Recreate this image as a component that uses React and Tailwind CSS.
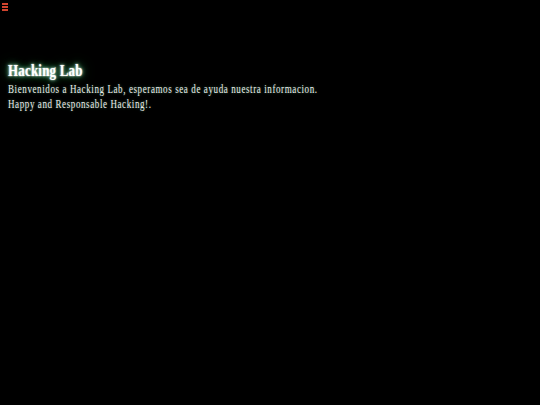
export default function App() {
  return (
    <div className="min-h-screen bg-black text-[#ececec]" style={{ fontFamily: '"Liberation Serif", "Times New Roman", serif' }}>
      {/* menu toggle */}
      <button className="flex flex-col gap-[1.5px] pl-[2px] pt-[3px]">
        <span className="block h-[1.5px] w-[6px] bg-[#d0442e]" />
        <span className="block h-[1.5px] w-[6px] bg-[#d0442e]" />
        <span className="block h-[1.5px] w-[6px] bg-[#d0442e]" />
      </button>

      <div className="px-2 pt-[50px]">
        <h1 className="text-[17px] leading-[20px] font-bold">
          <span className="inline-block origin-left scale-x-[0.76] tracking-[0.3px] text-white [text-shadow:0_0_2px_#fff,0_0_5px_rgba(160,255,200,0.8),0_0_10px_rgba(60,220,130,0.6),0_0_18px_rgba(30,160,90,0.5)]">
            Hacking Lab
          </span>
        </h1>
        <p className="mt-[1px] inline-block origin-left scale-x-[0.75] whitespace-nowrap text-[12px] leading-[15px] tracking-[0.8px] [text-shadow:0_0_3px_rgba(120,255,170,0.4)]">
          Bienvenidos a Hacking Lab, esperamos sea de ayuda nuestra informacion.
          <br />
          Happy and Responsable Hacking!.
        </p>
      </div>
    </div>
  );
}
